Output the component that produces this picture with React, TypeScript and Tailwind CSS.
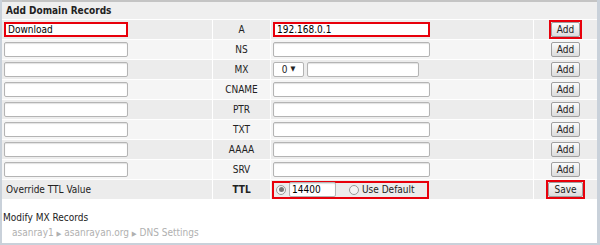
import React from "react";

const rows = [
  { type: "A", name: "Download", value: "192.168.0.1", marked: true },
  { type: "NS" },
  { type: "MX", mx: true },
  { type: "CNAME" },
  { type: "PTR" },
  { type: "TXT" },
  { type: "AAAA" },
  { type: "SRV" },
];

function TextBox({ value = "", marked = false, className = "" }: { value?: string; marked?: boolean; className?: string }) {
  return (
    <div
      className={[
        "flex h-[15px] items-center bg-white px-[2px] text-[10px] leading-none text-black",
        marked ? "border-2 border-[#e8000b]" : "rounded-[2px] border border-[#b4b4b4] shadow-[inset_0_1px_1px_rgba(0,0,0,0.12)]",
        className,
      ].join(" ")}
    >
      {value}
    </div>
  );
}

function Btn({ label, marked = false }: { label: string; marked?: boolean }) {
  const inner = (
    <div className="flex h-[15px] items-center justify-center rounded-[2px] border border-[#a0a0a0] bg-gradient-to-b from-[#fbfbfb] to-[#dcdcdc] px-[5px] text-[10px] leading-none text-[#222]">
      {label}
    </div>
  );
  if (!marked) return inner;
  return <div className="border-2 border-[#e8000b]">{inner}</div>;
}

export default function App() {
  return (
    <div
      className="h-[245px] w-[600px] overflow-hidden border-b-2 border-l-2 border-r-[3px] border-[#c9d1da] bg-white text-[10px] text-[#222]"
      style={{ fontFamily: "Tahoma, 'DejaVu Sans Condensed', 'DejaVu Sans', sans-serif" }}
    >
      <div className="flex h-[19px] items-center border-t-2 border-[#c4c4c4] bg-[#efefef] pl-[4px] font-bold">
        Add Domain Records
      </div>

      {rows.map((r, i) => (
        <div
          key={r.type}
          className={[
            "grid h-[20px] grid-cols-[210px_58px_263px_1fr] border-t border-white",
            i % 2 === 0 ? "bg-[#ececec]" : "bg-[#f5f5f5]",
          ].join(" ")}
        >
          <div className="flex items-center pl-[2px]">
            <TextBox value={r.name} marked={r.marked} className="w-[124px]" />
          </div>
          <div className="flex items-center justify-center border-l border-white">{r.type}</div>
          <div className="flex items-center gap-[3px] border-l border-white pl-[2px]">
            {r.mx ? (
              <>
                <div className="flex h-[15px] w-[31px] items-center justify-center gap-[3px] rounded-[2px] border border-[#b4b4b4] bg-white leading-none">
                  0 <span className="text-[7px]">▼</span>
                </div>
                <TextBox className="w-[112px]" />
              </>
            ) : (
              <TextBox value={r.value} marked={r.marked} className="w-[157px]" />
            )}
          </div>
          <div className="flex items-center justify-center border-l border-white">
            <Btn label="Add" marked={r.marked} />
          </div>
        </div>
      ))}

      <div className="grid h-[20px] grid-cols-[210px_58px_263px_1fr] border-t border-white bg-[#ececec]">
        <div className="flex items-center pl-[4px]">Override TTL Value</div>
        <div className="flex items-center justify-center border-l border-white font-bold">TTL</div>
        <div className="flex items-center border-l border-white pl-[1px]">
          <div className="flex h-[18px] w-[157px] items-center gap-[3px] border-2 border-[#e8000b] pl-[2px]">
            <span className="flex h-[10px] w-[10px] items-center justify-center rounded-full border border-[#999] bg-[#f4f4f4]">
              <span className="h-[5px] w-[5px] rounded-full bg-[#777]" />
            </span>
            <TextBox value="14400" className="h-[13px] w-[47px]" />
            <span className="ml-[10px] h-[10px] w-[10px] rounded-full border border-[#999] bg-[#f4f4f4]" />
            <span>Use Default</span>
          </div>
        </div>
        <div className="flex items-center justify-center border-l border-white">
          <Btn label="Save" marked />
        </div>
      </div>

      <div className="mt-[13px] pl-[1px] leading-[12px]">Modify MX Records</div>
      <div className="mt-[3px] pl-[10px] leading-[12px] text-[#b0b0b0]">
        asanray1 <span className="text-[7px]">▶</span> asanrayan.org <span className="text-[7px]">▶</span> DNS Settings
      </div>
    </div>
  );
}
